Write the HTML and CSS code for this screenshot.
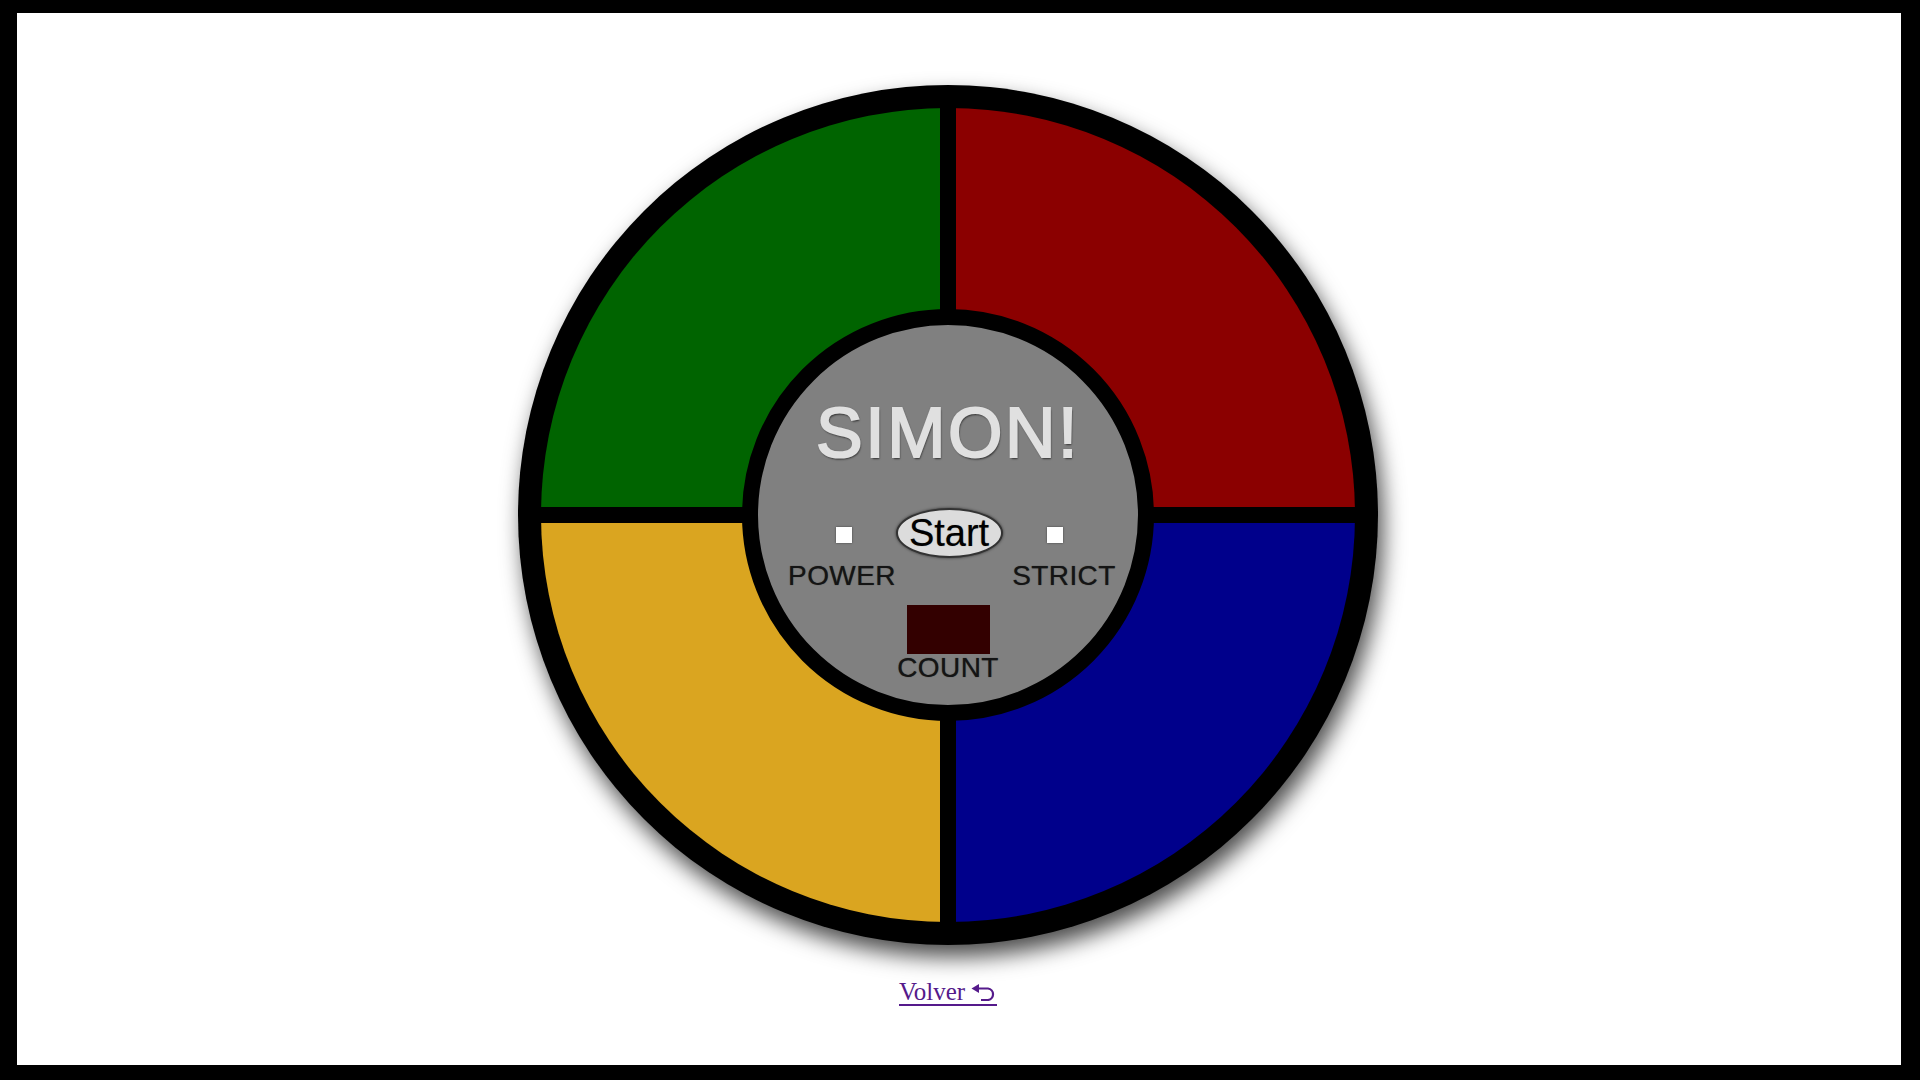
FILE: index.html
```html
<!DOCTYPE html>
<html lang="es">
<head>
<meta charset="utf-8">
<title>Simon</title>
<link rel="stylesheet" href="styles.css">
</head>
<body>
<div class="frame">
  <main class="page">
    <div class="simon">
      <div class="pads">
        <div class="pad green"></div>
        <div class="pad red"></div>
        <div class="pad yellow"></div>
        <div class="pad blue"></div>
      </div>
      <div class="hub">
        <h1 class="title">SIMON!</h1>
        <div class="controls">
          <span class="led led-power"></span>
          <button class="start" type="button">Start</button>
          <span class="led led-strict"></span>
          <span class="label label-power">POWER</span>
          <span class="label label-strict">STRICT</span>
        </div>
        <div class="count"></div>
        <span class="label count-label">COUNT</span>
      </div>
    </div>
    <a class="back" href="#">Volver<svg class="back-icon" width="26" height="17" viewBox="0 0 26 17" aria-hidden="true"><path d="M0.5 4.5 L8 0 L8 9 Z" fill="#551a8b"/><path d="M7 4.5 H17 A5.8 5.8 0 0 1 17 16 H10" fill="none" stroke="#551a8b" stroke-width="2.2"/></svg></a>
  </main>
</div>
</body>
</html>
```

FILE: styles.css
```css
html, body {
  margin: 0;
  padding: 0;
}

body {
  background: #000;
}

.frame {
  box-sizing: border-box;
  width: 1920px;
  height: 1080px;
  border-style: solid;
  border-color: #000;
  border-width: 13px 19px 15px 17px;
  background: #fff;
}

.page {
  box-sizing: border-box;
  height: 100%;
  padding: 72px 22px 0 0;
  display: flex;
  flex-direction: column;
  align-items: center;
}

.simon {
  position: relative;
  box-sizing: border-box;
  width: 860px;
  height: 860px;
  padding: 23px;
  border-radius: 50%;
  background: #000;
  box-shadow: 5px 12px 22px rgba(0, 0, 0, 0.7);
  flex-shrink: 0;
}

.pads {
  width: 814px;
  height: 814px;
  border-radius: 50%;
  overflow: hidden;
  display: grid;
  grid-template-columns: 1fr 1fr;
  grid-template-rows: 1fr 1fr;
  gap: 16px;
  background: #000;
}

.green { background: #006400; }
.red { background: #8b0000; }
.yellow { background: #daa520; }
.blue { background: #00008b; }

.hub {
  position: absolute;
  left: 50%;
  top: 50%;
  transform: translate(-50%, -50%);
  box-sizing: border-box;
  width: 412px;
  height: 412px;
  border-radius: 50%;
  border: 16px solid #000;
  background: #808080;
  display: flex;
  flex-direction: column;
  align-items: center;
  padding-top: 73px;
}

.title {
  margin: 0;
  font-family: "Liberation Sans", Arial, sans-serif;
  font-weight: 400;
  font-size: 70px;
  line-height: 1;
  letter-spacing: 2.5px;
  color: #e0e0e0;
  -webkit-text-stroke: 2px #e0e0e0;
  text-shadow: 0 0 2px #333, 1px 2px 2px rgba(0, 0, 0, 0.6);
}

.controls {
  align-self: flex-start;
  margin: 40px 0 0 32px;
  display: grid;
  grid-template-columns: 104px 110px 120px;
  grid-template-rows: 50px auto;
  row-gap: 4px;
  align-items: center;
  justify-items: center;
}

.led {
  width: 16px;
  height: 16px;
  background: #fff;
  box-shadow: 0 0 2px rgba(0, 0, 0, 0.5);
  margin-top: 4px;
}

.led-power {
  grid-column: 1;
  grid-row: 1;
  margin-left: 4px;
}

.led-strict {
  grid-column: 3;
  grid-row: 1;
  margin-right: 18px;
}

.start {
  grid-column: 2;
  grid-row: 1;
  box-sizing: border-box;
  width: 107px;
  height: 50px;
  padding: 0;
  border: 2px solid #333;
  border-radius: 50%;
  background: #dcdcdc;
  box-shadow: 0 0 3px rgba(0, 0, 0, 0.6);
  font-family: "Liberation Sans", Arial, sans-serif;
  font-size: 38px;
  line-height: 1;
  color: #000;
  text-shadow: 0 0 1px rgba(0, 0, 0, 0.4);
}

.label {
  font-family: "Liberation Sans", Arial, sans-serif;
  font-size: 28px;
  line-height: 1;
  letter-spacing: 0.4px;
  color: #141414;
  text-shadow: 0 0 1px rgba(0, 0, 0, 0.6);
}

.label-power {
  grid-column: 1;
  grid-row: 2;
}

.label-strict {
  grid-column: 3;
  grid-row: 2;
}

.count {
  width: 83px;
  height: 49px;
  margin-top: 15px;
  background: #330000;
}

.back {
  margin-top: 34px;
  display: inline-flex;
  align-items: flex-end;
  gap: 6px;
  font-family: "Liberation Serif", "Times New Roman", serif;
  font-size: 25px;
  line-height: 1;
  color: #551a8b;
  text-decoration: none;
  border-bottom: 2px solid #551a8b;
}

.back-icon {
  margin-bottom: 3px;
}
```
